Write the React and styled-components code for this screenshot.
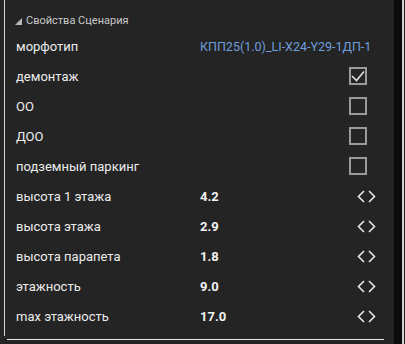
import styled, { createGlobalStyle } from 'styled-components';

const GlobalStyle = createGlobalStyle`
  html, body {
    margin: 0;
    padding: 0;
    background: #242424;
  }
  body {
    font-family: Roboto, "Noto Sans", sans-serif;
  }
`;

const Screen = styled.div`
  display: flex;
  width: 405px;
  height: 344px;
  background: #242424;
  overflow: hidden;
`;

const Panel = styled.div`
  width: 394px;
  display: flex;
  flex-direction: column;
`;

const Body = styled.div`
  margin-left: 4px;
  height: 336px;
  border-left: 1px solid #d8d8d8;
  display: flex;
  flex-direction: column;
`;

const BottomLine = styled.div`
  margin: 3px 0 0 7px;
  width: 377px;
  height: 1px;
  background: #e6e6e6;
`;

const Gutter = styled.div`
  width: 8px;
  background: #0b0b0b;
`;

const Edge = styled.div`
  width: 2px;
  background: #d0d0d0;
`;

const Header = styled.div`
  display: flex;
  align-items: center;
  gap: 4px;
  height: 19px;
  padding: 11px 0 1px 10px;
  color: #c8c8c8;
  font-size: 11px;
`;

const Triangle = styled.span`
  width: 0;
  height: 0;
  border-left: 7px solid transparent;
  border-bottom: 7px solid #b8b8b8;
  margin-top: 1px;
`;

const Row = styled.div`
  display: grid;
  grid-template-columns: 184px 149px auto;
  align-items: center;
  height: 30px;
  padding-left: 11px;
  color: #ececec;
  font-size: 13px;
`;

const Label = styled.span``;

const Value = styled.span`
  font-weight: ${(p) => (p.$link ? 400 : 700)};
  font-size: ${(p) => (p.$link ? '12.5px' : '13px')};
  color: ${(p) => (p.$link ? '#6e9fdc' : '#f2f2f2')};
  white-space: nowrap;
  ${(p) => p.$link && 'grid-column: 2 / 4;'}
`;

const CheckBox = styled.div`
  justify-self: start;
  width: 14px;
  height: 14px;
  border: 2px solid #9a9a9a;
  display: flex;
  align-items: center;
  justify-content: center;
`;

const Stepper = styled.span`
  justify-self: start;
  margin-left: 8px;
  display: flex;
  gap: 3px;
`;

function Check({ checked }) {
  return (
    <CheckBox>
      {checked && (
        <svg width="14" height="14" viewBox="0 0 14 14">
          <path d="M1 7 L5.5 11.5 L13 2.5" fill="none" stroke="#e0e0e0" strokeWidth="1.6" />
        </svg>
      )}
    </CheckBox>
  );
}

function Arrows() {
  return (
    <Stepper>
      <svg width="8" height="13" viewBox="0 0 8 13">
        <path d="M7 1 L1.5 6.5 L7 12" fill="none" stroke="#e6e6e6" strokeWidth="1.6" />
      </svg>
      <svg width="8" height="13" viewBox="0 0 8 13">
        <path d="M1 1 L6.5 6.5 L1 12" fill="none" stroke="#e6e6e6" strokeWidth="1.6" />
      </svg>
    </Stepper>
  );
}

const flags = [
  { label: 'демонтаж', checked: true },
  { label: 'ОО', checked: false },
  { label: 'ДОО', checked: false },
  { label: 'подземный паркинг', checked: false }
];

const numbers = [
  { label: 'высота 1 этажа', value: '4.2' },
  { label: 'высота этажа', value: '2.9' },
  { label: 'высота парапета', value: '1.8' },
  { label: 'этажность', value: '9.0' },
  { label: 'max этажность', value: '17.0' }
];

export default function App() {
  return (
    <Screen>
      <GlobalStyle />
      <Panel>
        <Body>
          <Header>
            <Triangle />
            Свойства Сценария
          </Header>
          <Row>
            <Label>морфотип</Label>
            <Value $link>КПП25(1.0)_LI-X24-Y29-1ДП-1</Value>
          </Row>
          {flags.map((f) => (
            <Row key={f.label}>
              <Label>{f.label}</Label>
              <span />
              <Check checked={f.checked} />
            </Row>
          ))}
          {numbers.map((n) => (
            <Row key={n.label}>
              <Label>{n.label}</Label>
              <Value>{n.value}</Value>
              <Arrows />
            </Row>
          ))}
        </Body>
        <BottomLine />
      </Panel>
      <Gutter />
      <Edge />
    </Screen>
  );
}
